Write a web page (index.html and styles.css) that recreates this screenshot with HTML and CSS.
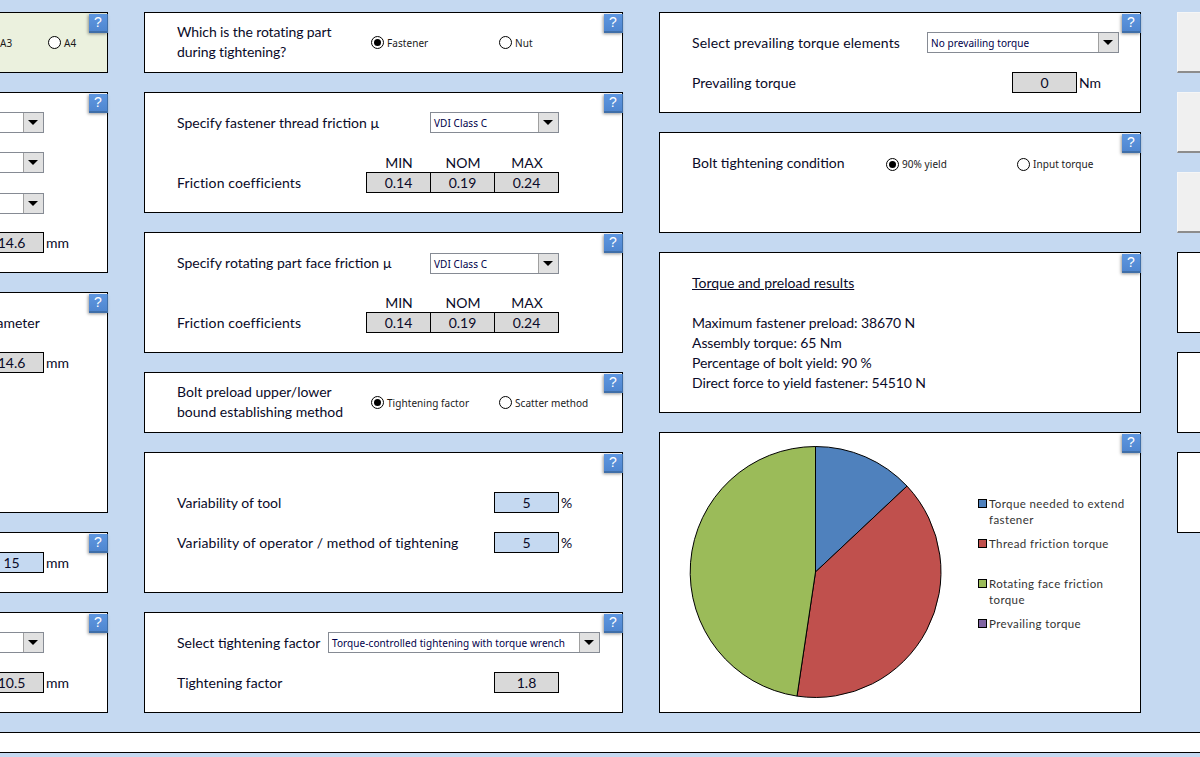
FILE: index.html
```html
<!DOCTYPE html>
<html>
<head>
<meta charset="utf-8">
<title>Tightening</title>
<link rel="stylesheet" href="styles.css">
</head>
<body>
<div class="sheet">
  <div class="col col1">
    <section class="card h61 green center">
      <span class="help">?</span>
      <span class="radio-text a3">A3</span>
      <div class="option"><span class="radio"></span><span class="radio-text">A4</span></div>
    </section>
    <section class="card h181 pt20">
      <span class="help">?</span>
      <div class="end"><div class="select s-short"><span class="arrow"></span></div></div>
      <div class="end"><div class="select s-short"><span class="arrow"></span></div></div>
      <div class="end"><div class="select s-short nudge"><span class="arrow"></span></div></div>
      <div class="end"><span class="field grey">14.6</span><span class="unit">mm</span></div>
    </section>
    <section class="card h221 pt20">
      <span class="help">?</span>
      <div class="row"><span class="label clipped">Clearance hole diameter</span></div>
      <div class="end"><span class="field grey">14.6</span><span class="unit">mm</span></div>
    </section>
    <section class="card h61 pt20">
      <span class="help">?</span>
      <div class="end"><span class="field blue">15</span><span class="unit">mm</span></div>
    </section>
    <section class="card h101 pt20">
      <span class="help">?</span>
      <div class="end"><div class="select s-short"><span class="arrow"></span></div></div>
      <div class="end"><span class="field grey">10.5</span><span class="unit">mm</span></div>
    </section>
  </div>

  <div class="col col2">
    <section class="card h61 center inset">
      <span class="help">?</span>
      <div class="label w194 two-line tight">Which is the rotating part<br>during tightening?</div>
      <div class="option w128"><span class="radio on"></span><span class="radio-text">Fastener</span></div>
      <div class="option"><span class="radio"></span><span class="radio-text">Nut</span></div>
    </section>
    <section class="card h121 pt20 inset">
      <span class="help">?</span>
      <div class="row"><span class="label w253">Specify fastener thread friction µ</span><div class="select s-vdi"><span class="select-text">VDI Class C</span><span class="arrow"></span></div></div>
      <div class="row head"><span class="hd">MIN</span><span class="hd">NOM</span><span class="hd">MAX</span></div>
      <div class="row"><span class="label w189 wide">Friction coefficients</span><span class="field grey">0.14</span><span class="field grey join">0.19</span><span class="field grey join">0.24</span></div>
    </section>
    <section class="card h121 pt20 inset">
      <span class="help">?</span>
      <div class="row"><span class="label w253">Specify rotating part face friction µ</span><div class="select s-vdi nudge"><span class="select-text">VDI Class C</span><span class="arrow"></span></div></div>
      <div class="row head"><span class="hd">MIN</span><span class="hd">NOM</span><span class="hd">MAX</span></div>
      <div class="row"><span class="label w189 wide">Friction coefficients</span><span class="field grey">0.14</span><span class="field grey join">0.19</span><span class="field grey join">0.24</span></div>
    </section>
    <section class="card h61 center inset">
      <span class="help">?</span>
      <div class="label w194 two-line">Bolt preload upper/lower<br>bound establishing method</div>
      <div class="option w128"><span class="radio on"></span><span class="radio-text">Tightening factor</span></div>
      <div class="option"><span class="radio"></span><span class="radio-text">Scatter method</span></div>
    </section>
    <section class="card h141 pt40 inset gap20">
      <span class="help">?</span>
      <div class="row"><span class="label w317">Variability of tool</span><span class="field blue">5</span><span class="unit">%</span></div>
      <div class="row"><span class="label w317 wide">Variability of operator / method of tightening</span><span class="field blue">5</span><span class="unit">%</span></div>
    </section>
    <section class="card h101 pt20 inset gap20">
      <span class="help">?</span>
      <div class="row"><span class="label w151">Select tightening factor</span><div class="select s-long"><span class="select-text">Torque-controlled tightening with torque wrench</span><span class="arrow"></span></div></div>
      <div class="row"><span class="label w317">Tightening factor</span><span class="field grey">1.8</span></div>
    </section>
  </div>

  <div class="col col3">
    <section class="card h101 pt20 inset gap20">
      <span class="help">?</span>
      <div class="row"><span class="label w235 wide">Select prevailing torque elements</span><div class="select s-prev"><span class="select-text">No prevailing torque</span><span class="arrow"></span></div></div>
      <div class="row"><span class="label w320">Prevailing torque</span><span class="field grey">0</span><span class="unit">Nm</span></div>
    </section>
    <section class="card h101 pt20 inset">
      <span class="help">?</span>
      <div class="row"><span class="label w194">Bolt tightening condition</span>
        <div class="option w131"><span class="radio on"></span><span class="radio-text">90% yield</span></div>
        <div class="option"><span class="radio"></span><span class="radio-text">Input torque</span></div>
      </div>
    </section>
    <section class="card h161 pt20 inset">
      <span class="help">?</span>
      <div class="row"><span class="label underline">Torque and preload results</span></div>
      <div class="row"></div>
      <div class="row"><span class="label tight">Maximum fastener preload: 38670 N</span></div>
      <div class="row"><span class="label tight">Assembly torque: 65 Nm</span></div>
      <div class="row"><span class="label tight">Percentage of bolt yield: 90 %</span></div>
      <div class="row"><span class="label tight">Direct force to yield fastener: 54510 N</span></div>
    </section>
    <section class="card h281 chart">
      <span class="help">?</span>
      <svg class="pie" width="254" height="254" viewBox="-126.5 -127 254 254">
        <path d="M0 0 L0 -125.5 A125.5 125.5 0 0 1 91.5 -85.9 Z" fill="#4f81bd" stroke="#000" stroke-width="1"/>
        <path d="M0 0 L91.5 -85.9 A125.5 125.5 0 0 1 -18.5 124.1 Z" fill="#c0504d" stroke="#000" stroke-width="1"/>
        <path d="M0 0 L-18.5 124.1 A125.5 125.5 0 0 1 0 -125.5 Z" fill="#9bbb59" stroke="#000" stroke-width="1"/>
      </svg>
      <ul class="legend">
        <li><span class="swatch sw-blue"></span><span>Torque needed to extend fastener</span></li>
        <li><span class="swatch sw-red"></span><span>Thread friction torque</span></li>
        <li><span class="swatch sw-green"></span><span>Rotating face friction torque</span></li>
        <li><span class="swatch sw-purple"></span><span>Prevailing torque</span></li>
      </ul>
    </section>
  </div>

  <div class="col col4">
    <div class="btn"></div>
    <div class="btn"></div>
    <div class="btn"></div>
    <section class="card h81"></section>
    <section class="card h81"></section>
    <section class="card h81"></section>
  </div>
</div>
<div class="footer"></div>
</body>
</html>
```

FILE: styles.css
```css
* { box-sizing: border-box; }
html, body { margin: 0; height: 100%; overflow: hidden; }
body { background: #c5d9f1; font-family: "Lato", "Liberation Sans", sans-serif; font-size: 14px; color: #0a0a28; }

.sheet { display: flex; gap: 36px; padding-top: 12px; margin-left: -32px; width: 1400px; }
.col { display: flex; flex-direction: column; gap: 19px; flex: none; }
.col1 { width: 140px; }
.col2 { width: 479px; }
.col3 { width: 482px; }
.col4 { width: 140px; }

.card { position: relative; background: #fff; border: 1px solid #000; }
.green { background: #ebf1de; }
.h61 { height: 61px; }
.h81 { height: 81px; }
.h101 { height: 101px; }
.h121 { height: 121px; }
.h141 { height: 141px; }
.h161 { height: 161px; }
.h181 { height: 181px; }
.h221 { height: 221px; }
.h281 { height: 281px; }
.pt20 { padding-top: 20px; }
.pt40 { padding-top: 40px; }
.inset { padding-left: 32px; }
.center { display: flex; align-items: center; }
.gap20 { display: flex; flex-direction: column; gap: 20px; }
.col1 .pt20 { display: flex; flex-direction: column; gap: 20px; }

.row { display: flex; align-items: center; height: 20px; flex: none; }
.head { margin-top: 20px; padding-left: 190px; }
.end { display: flex; align-items: center; height: 20px; padding-left: 10px; }

.label { line-height: 20px; white-space: nowrap; flex: none; }
.two-line { margin-top: -2px; }
.underline { text-decoration: underline; }
.wide { letter-spacing: .13px; }
.tight { letter-spacing: -.1px; }
.w151 { width: 151px; }
.w189 { width: 189px; }
.w194 { width: 194px; }
.w235 { width: 235px; }
.w253 { width: 253px; }
.w317 { width: 317px; }
.w320 { width: 320px; }
.w128 { width: 128px; }
.w131 { width: 131px; }

.clipped { margin-left: -78px; width: 200px; }
.hd { width: 64px; text-align: center; margin-top: -2px; }

.field { width: 65px; height: 21px; margin-top: -1px; border: 1px solid #000; display: flex; align-items: center; justify-content: center; flex: none; }
.field.join { margin-left: -1px; }
.grey { background: #d9d9d9; }
.blue { background: #c5d9f1; }
.unit { margin-left: 2px; margin-top: -2px; }

.select { display: flex; align-items: center; height: 21px; margin-top: -1px; border: 1px solid #868b94; background: #fff; flex: none; }
.select.nudge { margin-top: 1px; }
.select-text { flex: 1; padding-left: 3px; font-family: "Noto Sans", sans-serif; font-size: 10px; letter-spacing: .08px; white-space: nowrap; overflow: hidden; color: #00004a; }
.s-short { width: 65px; justify-content: flex-end; }
.s-vdi { width: 129px; }
.s-long { width: 272px; }
.s-prev { width: 192px; }
.arrow { width: 20px; height: 19px; background: #e1e1e1; border-left: 1px solid #a0a0a0; position: relative; flex: none; }
.arrow::after { content: ""; position: absolute; left: 4px; top: 7px; border: 5px solid transparent; border-top: 5px solid #000; border-bottom: 0; }

.option { display: flex; align-items: center; flex: none; margin-top: 2px; }
.center > .option { margin-top: 0; }
.radio { width: 13px; height: 13px; border: 1px solid #000; border-radius: 50%; background: #fff; flex: none; position: relative; margin-right: 3px; }
.radio.on::after { content: ""; position: absolute; left: 2px; top: 2px; width: 7px; height: 7px; border-radius: 50%; background: #000; }
.radio-text { font-family: "Noto Sans", sans-serif; font-size: 10px; letter-spacing: .06px; white-space: nowrap; color: #1a1a1a; }
.a3 { width: 48px; margin-left: 31px; }

.help { position: absolute; top: 1px; right: -1px; width: 19px; height: 19px; background: linear-gradient(#5f97e0, #4f86d0); border-right: 1px solid #3f6ea8; border-bottom: 2px solid #3f6ea8; box-shadow: -1px 1px 3px rgba(0,0,0,.4); color: #fff; font: 14px/17px "Liberation Sans", sans-serif; text-align: center; }

.chart { display: flex; padding: 12px 0 0 29px; }
.pie { flex: none; display: block; }
.legend { list-style: none; margin: 51px 0 0 35px; padding: 0; width: 155px; font-size: 11.5px; line-height: 16px; letter-spacing: .4px; color: #333; }
.legend li { height: 40px; display: flex; gap: 2px; align-items: flex-start; }
.swatch { width: 9px; height: 9px; border: 1px solid #000; flex: none; margin-top: 3px; }
.sw-blue { background: #4f81bd; }
.sw-red { background: #c0504d; }
.sw-green { background: #9bbb59; }
.sw-purple { background: #8064a2; }

.btn { height: 61px; background: #f0f0f0; border-top: 1px solid #f6f6f6; border-left: 1px solid #f6f6f6; border-bottom: 2px solid #8c8c8c; }

.footer { margin-top: 19px; height: 21px; background: #fff; border-top: 1px solid #000; border-bottom: 1px solid #000; }
```
